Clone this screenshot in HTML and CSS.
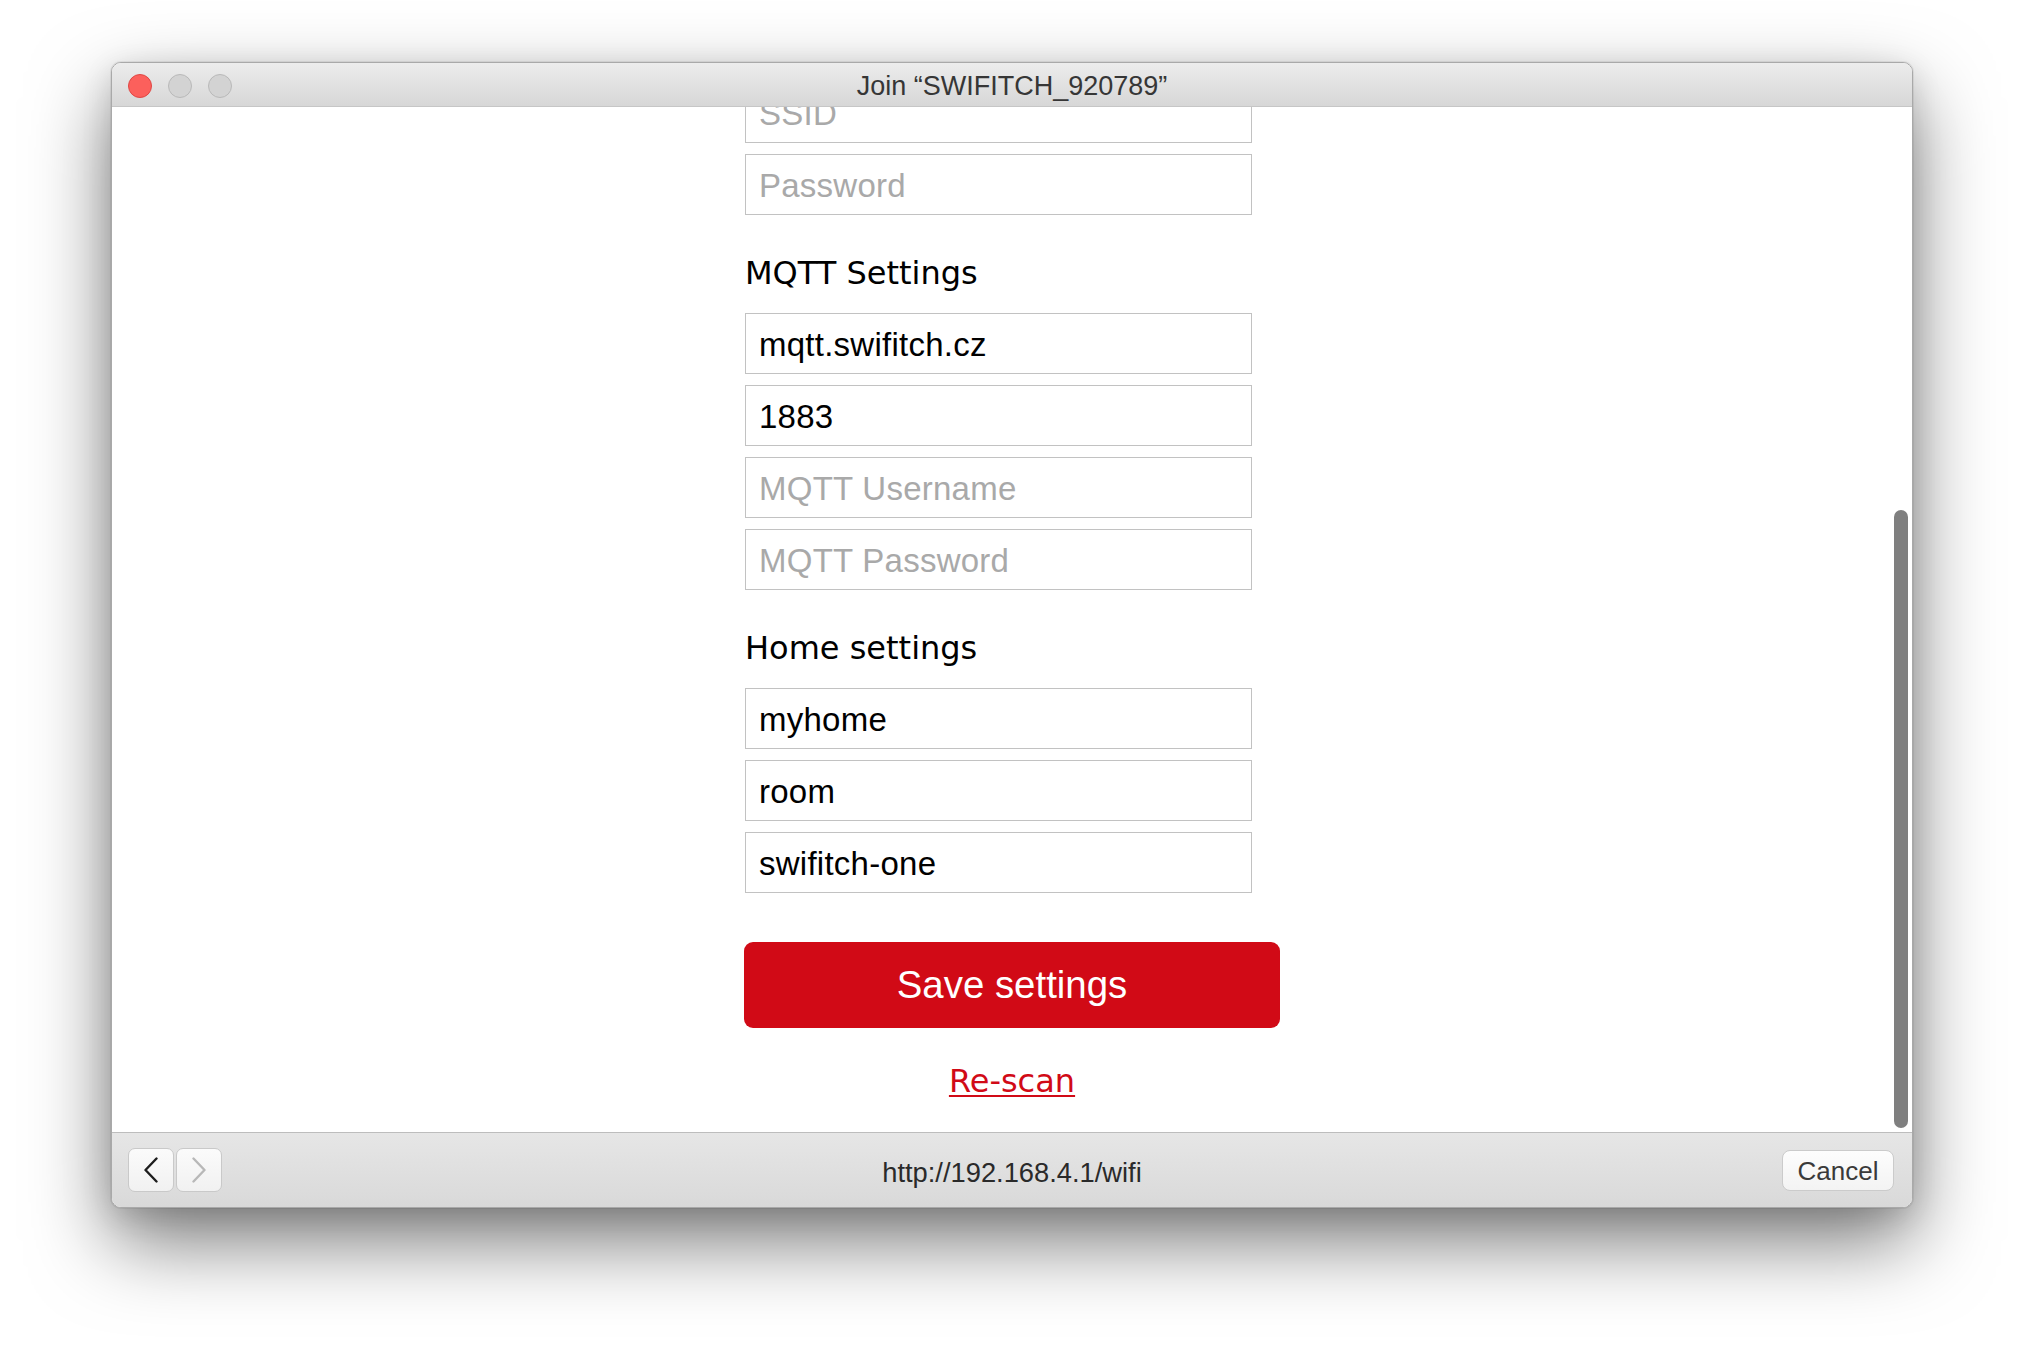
FILE: index.html
```html
<!DOCTYPE html>
<html lang="en">
<head>
<meta charset="utf-8">
<title>Join “SWIFITCH_920789”</title>
<link rel="stylesheet" href="styles.css">
</head>
<body>
<div class="window">
  <div class="titlebar">
    <div class="lights">
      <span class="light close"></span>
      <span class="light"></span>
      <span class="light"></span>
    </div>
    <div class="title">Join “SWIFITCH_920789”</div>
    <div></div>
  </div>
  <div class="viewport">
    <form class="page">
      <div class="field"><span class="ph">SSID</span></div>
      <div class="field"><span class="ph">Password</span></div>
      <div class="heading">MQTT Settings</div>
      <div class="field">mqtt.swifitch.cz</div>
      <div class="field">1883</div>
      <div class="field"><span class="ph">MQTT Username</span></div>
      <div class="field"><span class="ph">MQTT Password</span></div>
      <div class="heading">Home settings</div>
      <div class="field">myhome</div>
      <div class="field">room</div>
      <div class="field">swifitch-one</div>
      <div class="save">Save settings</div>
      <div class="rescan"><a href="#">Re-scan</a></div>
    </form>
    <div class="thumb"></div>
  </div>
  <div class="toolbar">
    <div class="nav">
      <div class="navbtn">
        <svg width="16" height="26" viewBox="0 0 16 26"><path d="M13.5 1.5 L2.5 13 L13.5 24.5" fill="none" stroke="#1d1d1d" stroke-width="2.4" stroke-linecap="round" stroke-linejoin="round"/></svg>
      </div>
      <div class="navbtn">
        <svg width="16" height="26" viewBox="0 0 16 26"><path d="M2.5 1.5 L13.5 13 L2.5 24.5" fill="none" stroke="#b8b8b8" stroke-width="2.4" stroke-linecap="round" stroke-linejoin="round"/></svg>
      </div>
    </div>
    <div class="url">http://192.168.4.1/wifi</div>
    <div class="cancel-wrap"><div class="cancel">Cancel</div></div>
  </div>
</div>
</body>
</html>
```

FILE: styles.css
```css
html, body {
  margin: 0;
  padding: 0;
  background: #ffffff;
}

body {
  padding: 62px 0 0 111px;
  height: 1368px;
  box-sizing: border-box;
  overflow: hidden;
}

.window {
  width: 1800px;
  border: 1px solid #a9a9a9;
  border-radius: 10px;
  overflow: hidden;
  background: #fff;
  box-shadow: 0 0 0 1px rgba(0,0,0,0.06), 0 34px 80px rgba(0,0,0,0.52), 0 8px 30px rgba(0,0,0,0.12);
}

.titlebar {
  height: 43px;
  border-bottom: 1px solid #c6c6c6;
  background: linear-gradient(#ececec, #d7d7d7);
  display: grid;
  grid-template-columns: 1fr auto 1fr;
  align-items: center;
}

.lights {
  display: flex;
  gap: 16px;
  padding-left: 16px;
  padding-top: 2px;
}

.light {
  width: 22px;
  height: 22px;
  border-radius: 50%;
  background: #d3d3d3;
  border: 1px solid #b9b9b9;
}

.light.close {
  background: #fc605c;
  border-color: #df4744;
}

.title {
  font-family: "Liberation Sans", Arial, sans-serif;
  font-size: 27px;
  color: #363636;
  padding-top: 4px;
}

.viewport {
  height: 1025px;
  overflow: hidden;
  position: relative;
  background: #fff;
}

.page {
  width: 536px;
  margin: -25px auto 0;
  display: flex;
  flex-direction: column;
  gap: 11px;
  font-family: "DejaVu Sans", Verdana, sans-serif;
  font-size: 32px;
}

.field {
  width: 507px;
  margin-left: 1px;
  box-sizing: border-box;
  height: 61px;
  border: 1px solid #c2c2c2;
  padding: 11px 10px 9px 13px;
  line-height: 39px;
  font-family: "Liberation Sans", Arial, sans-serif;
  font-size: 33px;
  letter-spacing: 0.25px;
  color: #000;
  white-space: nowrap;
}

.ph {
  color: #a9a9a9;
}

.heading {
  margin: 28px 0 10px 1px;
  line-height: 38px;
  color: #000;
}

.save {
  margin-top: 38px;
  height: 86px;
  box-sizing: border-box;
  padding: 21px 0;
  line-height: 44px;
  border-radius: 9px;
  background: #d10a16;
  color: #fff;
  text-align: center;
  font-family: "Liberation Sans", Arial, sans-serif;
  font-size: 38.4px;
}

.rescan {
  margin-top: 24px;
  text-align: center;
  line-height: 37px;
}

.rescan a {
  color: #d10a16;
  text-decoration: underline;
  text-underline-offset: 3px;
  text-decoration-thickness: 2px;
}

.thumb {
  position: absolute;
  right: 4px;
  top: 403px;
  width: 14px;
  height: 618px;
  border-radius: 7px;
  background: #7f7f7f;
}

.toolbar {
  height: 74px;
  border-top: 1px solid #bdbdbd;
  background: linear-gradient(#e6e6e6, #d9d9d9);
  display: grid;
  grid-template-columns: 1fr auto 1fr;
  align-items: center;
  font-family: "Liberation Sans", Arial, sans-serif;
}

.nav {
  display: flex;
  gap: 2px;
  padding-left: 16px;
}

.navbtn {
  width: 46px;
  height: 44px;
  box-sizing: border-box;
  border: 1px solid #c9c9c9;
  border-radius: 7px;
  background: linear-gradient(#fbfbfb, #f1f1f1);
  display: flex;
  align-items: center;
  justify-content: center;
}

.url {
  font-size: 27.3px;
  color: #2a2a2a;
  padding-top: 6px;
}

.cancel-wrap {
  display: flex;
  justify-content: flex-end;
  padding-right: 18px;
}

.cancel {
  width: 112px;
  height: 41px;
  box-sizing: border-box;
  border: 1px solid #cbcbcb;
  border-radius: 8px;
  background: linear-gradient(#fdfdfd, #f3f3f3);
  font-size: 26px;
  color: #3a3a3a;
  text-align: center;
  line-height: 39px;
  padding-top: 1px;
}
```
